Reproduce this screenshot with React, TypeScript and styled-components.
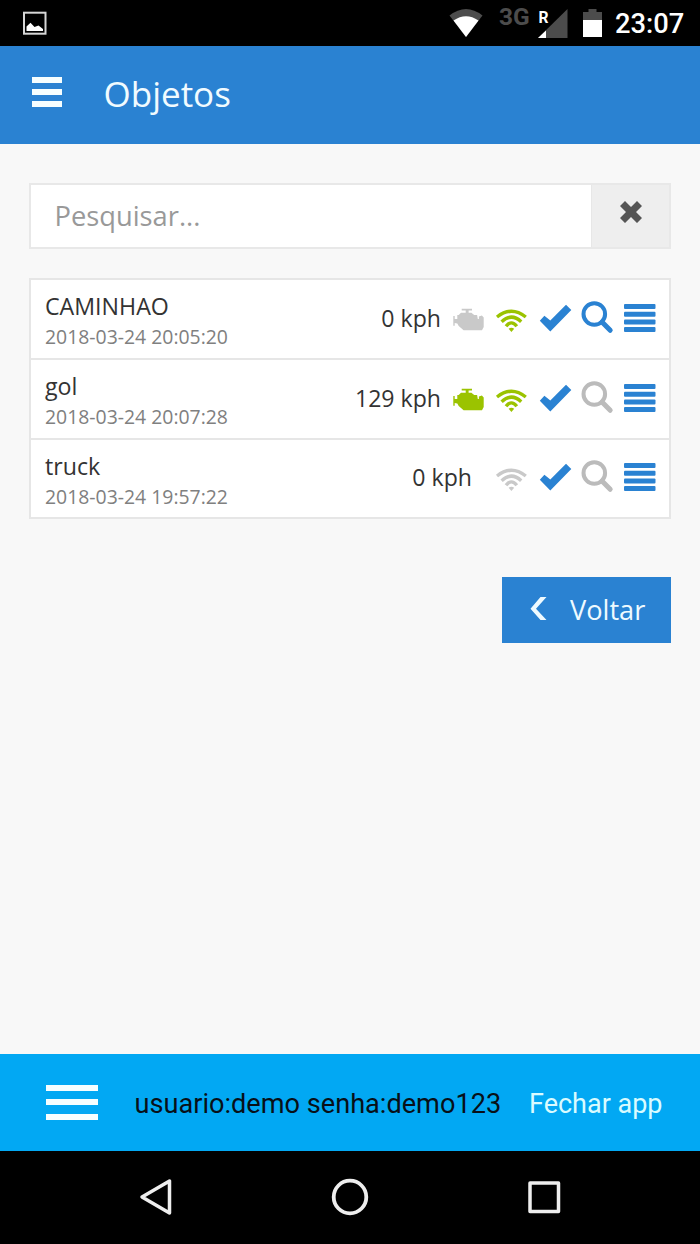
import React from 'react';
import styled, { createGlobalStyle } from 'styled-components';

const blue = '#2a82d2';
const green = '#9bc300';
const grey = '#c9c9c9';

const GlobalStyle = createGlobalStyle`
  * { box-sizing: border-box; }
  body { margin: 0; background: #f8f8f8; }
  svg { display: block; flex: none; }
`;

const Screen = styled.div`
  width: 700px;
  height: 1244px;
  display: flex;
  flex-direction: column;
  background: #f8f8f8;
  font-family: 'Open Sans', sans-serif;
  overflow: hidden;
`;

const StatusBar = styled.div`
  height: 46px;
  flex: none;
  display: flex;
  justify-content: space-between;
  padding: 0 16px 0 22px;
  background: #000;
  font-family: Roboto, sans-serif;
`;

const StatusRight = styled.div`
  display: flex;
`;

const Network = styled.span`
  width: 39px;
  margin-left: 14px;
  color: #4c4c4c;
  font-size: 24.5px;
  font-weight: 700;
  line-height: 34px;
`;

const Clock = styled.span`
  margin-left: 12px;
  color: #fff;
  font-size: 27.3px;
  font-weight: 500;
  line-height: 49px;
  width: 69px;
  white-space: nowrap;
`;

const Header = styled.header`
  height: 97.5px;
  flex: none;
  display: flex;
  align-items: flex-start;
  padding-left: 32px;
  background: ${blue};
`;

const Bars = styled.div<{ $width: number; $gap: number; $top: number }>`
  width: ${p => p.$width}px;
  display: flex;
  flex-direction: column;
  gap: ${p => p.$gap}px;
  margin-top: ${p => p.$top}px;
`;

const Bar = styled.span`
  height: 6px;
  background: #f6feff;
`;

const Title = styled.h1`
  margin: 0 0 0 41.5px;
  color: #f1fbff;
  font-size: 35px;
  font-weight: 400;
  line-height: 95px;
`;

const Content = styled.main`
  flex: 1;
  display: flex;
  flex-direction: column;
  padding: 39px 29px 0;
`;

const Search = styled.div`
  display: flex;
  height: 66px;
  border: 2px solid #e8e8e8;
  background: #fff;
`;

const Placeholder = styled.div`
  flex: 1;
  padding-left: 23.5px;
  color: #999;
  font-size: 27.3px;
  line-height: 62px;
`;

const ClearButton = styled.div`
  width: 78px;
  display: flex;
  justify-content: center;
  padding-top: 15px;
  background: #eee;
  border-left: 1px solid #e7e7e7;
`;

const List = styled.div`
  margin-top: 29.5px;
  border: 2px solid #e6e6e6;
  border-top: 0;
  background: #fff;
`;

const Row = styled.div`
  height: 79.75px;
  display: flex;
  align-items: center;
  border-top: 2px solid #e6e6e6;
  padding: 0 7px 0 14px;
`;

const Info = styled.div`
  flex: 1;
  padding-top: 5.5px;
`;

const Name = styled.div`
  color: #333;
  font-size: 23.2px;
  line-height: 31px;
`;

const Stamp = styled.div`
  color: #808080;
  font-size: 19.4px;
  line-height: 30px;
`;

const Speed = styled.div<{ $gap: number }>`
  color: #333;
  font-size: 23.1px;
  line-height: 40px;
  margin-right: ${p => p.$gap}px;
  padding-bottom: 2px;
`;

const BackButton = styled.div`
  align-self: flex-end;
  display: flex;
  align-items: center;
  width: 169px;
  height: 66px;
  margin-top: 58px;
  padding: 0 0 2px 28px;
  background: ${blue};
  color: #eefaff;
  font-size: 27.2px;
`;

const BackLabel = styled.span`
  margin-left: 23px;
`;

const BottomBar = styled.footer`
  height: 97px;
  flex: none;
  display: flex;
  padding-left: 46px;
  background: #02a8f3;
  font-family: Roboto, sans-serif;
  font-size: 27px;
  line-height: 100px;
  white-space: nowrap;
`;

const Credentials = styled.span`
  width: 394.5px;
  margin-left: 36.5px;
  color: #081018;
  font-size: 27.15px;
`;

const CloseApp = styled.span`
  color: #d9fbff;
`;

const NavBar = styled.nav`
  height: 93px;
  flex: none;
  display: flex;
  justify-content: space-between;
  align-items: center;
  padding: 0 138px 1px;
  background: #000;
`;

const EngineIcon = ({ color }: { color: string }) => (
  <svg width="43" height="40" fill={color}>
    <path d="M14.7 9.8H25v1.8h-3.4v2.2h2.8l2.8 2.2h2.900l.7 4H31.900v-2.500l3-.9 1.800 1.800v9.600L35 31.200H16.600l-4.900-4.300-1.400-2.400-2.600-.6v2.800H6.300V17h1.400v3h2.600v-4h1.400l2.300-2.200h4.700v-2.200h-4z" />
  </svg>
);

const WifiIcon = ({ color }: { color: string }) => (
  <svg width="43" height="40" fill="none" stroke={color} strokeWidth="3.400">
    <path d="M7 18Q21.4 6.600 35.800 18M11.600 22.700Q21.4 13.600 31.200 22.700M16 27.300Q21.4 20.400 26.800 27.300" />
    <path d="M18.600 29.800Q21.4 27.600 24.200 29.800L21.4 33z" fill={color} stroke="none" />
  </svg>
);

const CheckIcon = () => (
  <svg width="43" height="40" fill={blue}>
    <path d="M6.8 21.7l4.6-5 5.9 4.7L33 5.8l5.3 5.2-21 21.4z" />
  </svg>
);

const SearchIcon = ({ color }: { color: string }) => (
  <svg width="43" height="40" fill="none" stroke={color}>
    <circle cx="18.3" cy="15" r="10.8" strokeWidth="4" />
    <path d="M26 23l8.2 8.3" strokeWidth="5" strokeLinecap="round" />
  </svg>
);

const ListIcon = () => (
  <svg width="43" height="40" fill={blue}>
    {[5, 12.7, 20.5, 28.1].map(y => (
      <rect key={y} x="5" y={y} width="31.5" height="5" rx="1" />
    ))}
  </svg>
);

interface Item {
  name: string;
  stamp: string;
  speed: string;
  engine?: string;
  wifi: string;
  followed: boolean;
}

const items: Item[] = [
  { name: 'CAMINHAO', stamp: '2018-03-24 20:05:20', speed: '0 kph', engine: grey, wifi: green, followed: true },
  { name: 'gol', stamp: '2018-03-24 20:07:28', speed: '129 kph', engine: green, wifi: green, followed: false },
  { name: 'truck', stamp: '2018-03-24 19:57:22', speed: '0 kph', wifi: grey, followed: false },
];

export default function App() {
  return (
    <Screen>
      <GlobalStyle />
      <StatusBar>
        <svg width="26" height="46" fill="none">
          <rect x="2" y="12.7" width="21.5" height="21" stroke="#d6d6d6" strokeWidth="2" />
          <path d="M4.500 31V26.500L8.500 22.800L12.500 27L16.500 25.400L21 29V31z" fill="#fff" />
        </svg>
        <StatusRight>
          <svg width="36" height="46">
            <path d="M0.500 15.500Q17 2.500 33.500 15.500L17 37z" fill="#4c4c4c" />
            <path d="M4.500 20.500Q17 12 29.500 20.500L17 37z" fill="#fff" />
          </svg>
          <Network>3G</Network>
          <svg width="34" height="46">
            <path d="M29.500 9V38H0z" fill="#4c4c4c" />
            <path d="M8 30.500V38H0z" fill="#fff" />
            <path d="M0 8H11V24H0z" fill="#000" />
            <text x="0.500" y="23" fill="#fff" fontFamily="Roboto" fontWeight="700" fontSize="17" textLength="10" lengthAdjust="spacingAndGlyphs">R</text>
          </svg>
          <svg width="31" height="46">
            <path d="M11 20V12H16.500V9H24.500V12H30V20z" fill="#4c4c4c" />
            <path d="M11 20H30V37H11z" fill="#fff" />
          </svg>
          <Clock>23:07</Clock>
        </StatusRight>
      </StatusBar>
      <Header>
        <Bars $width={30} $gap={6} $top={30.5}>
          <Bar /><Bar /><Bar />
        </Bars>
        <Title>Objetos</Title>
      </Header>
      <Content>
        <Search>
          <Placeholder>Pesquisar...</Placeholder>
          <ClearButton>
            <svg width="24" height="24" fill="#555">
              <path d="M1 6L6 1L12 7L18 1L23 6L17 12L23 18L18 23L12 17L6 23L1 18L7 12z" />
            </svg>
          </ClearButton>
        </Search>
        <List>
          {items.map(item => (
            <Row key={item.name}>
              <Info>
                <Name>{item.name}</Name>
                <Stamp>{item.stamp}</Stamp>
              </Info>
              <Speed $gap={item.engine ? 6 : 18}>{item.speed}</Speed>
              {item.engine && <EngineIcon color={item.engine} />}
              <WifiIcon color={item.wifi} />
              <CheckIcon />
              <SearchIcon color={item.followed ? blue : '#bbb'} />
              <ListIcon />
            </Row>
          ))}
        </List>
        <BackButton>
          <svg width="17" height="24" fill="#eefaff">
            <path d="M10.500 0H16.500L6 11.700L16.500 23H10.500L0.500 11.700z" />
          </svg>
          <BackLabel>Voltar</BackLabel>
        </BackButton>
      </Content>
      <BottomBar>
        <Bars $width={52} $gap={8.7} $top={30.5}>
          <Bar /><Bar /><Bar />
        </Bars>
        <Credentials>usuario:demo senha:demo123</Credentials>
        <CloseApp>Fechar app</CloseApp>
      </BottomBar>
      <NavBar>
        <svg width="36" height="40" fill="none" stroke="#eee" strokeWidth="3.500" strokeLinejoin="round">
          <path d="M31.500 4V36L4 20z" />
        </svg>
        <svg width="40" height="40" fill="none" stroke="#eee" strokeWidth="3.800">
          <circle cx="20" cy="20" r="16.300" />
        </svg>
        <svg width="36" height="40" fill="none" stroke="#eee" strokeWidth="3.500" strokeLinejoin="round">
          <rect x="4" y="6" width="28.500" height="28.500" />
        </svg>
      </NavBar>
    </Screen>
  );
}
